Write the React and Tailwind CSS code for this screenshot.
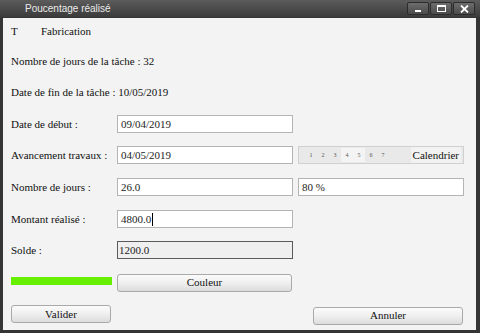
import { useState } from 'react'

// Fenetre "Poucentage réalisé" : barre de titre sombre, formulaire sur fond gris clair.
const JOURS_CALENDRIER = ['1', '2', '3', '4', '5', '6', '7']

function Champ({ valeur, largeur = 'w-[176px]', sombre = false, curseur = false }) {
  return (
    <div
      className={
        sombre
          ? `${largeur} h-[18px] flex items-center border border-[#5a5a5a] bg-[#efefef] pl-[1px] text-[11px] text-[#222]`
          : `${largeur} h-[18px] flex items-center border border-[#b4b4b4] bg-white pl-[3px] text-[11px] text-[#222]`
      }
    >
      <span>{valeur}</span>
      {curseur && <span className="ml-[1px] h-[13px] w-px bg-black" />}
    </div>
  )
}

function Bouton({ texte, largeur }) {
  return (
    <button
      type="button"
      className={`${largeur} h-[18px] rounded-[3px] border border-[#a9a9a9] bg-gradient-to-b from-[#fbfbfb] via-[#efefef] to-[#dcdcdc] font-['Liberation_Serif','DejaVu_Serif',serif] text-[11px] text-[#111] leading-none`}
    >
      {texte}
    </button>
  )
}

function BoutonFenetre({ children }) {
  return (
    <div className="w-[22px] h-[13px] flex items-center justify-center rounded-[2px] border border-[#2c2c2c] bg-gradient-to-b from-[#6e6e6e] to-[#4a4a4a]">
      {children}
    </div>
  )
}

function Ligne({ label, children, haut }) {
  return (
    <div className={`${haut} flex h-[18px] items-center`}>
      <span className="w-[106px] text-[11px] text-[#111]">{label}</span>
      {children}
    </div>
  )
}

export default function App() {
  const [montant] = useState('4800.0')

  return (
    <div className="w-[480px] h-[333px] flex flex-col bg-[#353535] overflow-hidden">
      <div className="h-[17px] flex items-center bg-gradient-to-b from-[#5c5c5c] to-[#3b3b3b]">
        <span className="ml-[25px] font-['Liberation_Sans',Arial,sans-serif] text-[10px] font-medium text-[#ececec]">
          Poucentage réalisé
        </span>
        <div className="ml-auto mr-[5px] flex gap-[1px]">
          <BoutonFenetre>
            <span className="mt-[4px] h-[2px] w-[6px] bg-white" />
          </BoutonFenetre>
          <BoutonFenetre>
            <span className="h-[7px] w-[9px] border border-white border-t-2" />
          </BoutonFenetre>
          <BoutonFenetre>
            <svg width="9" height="8" viewBox="0 0 9 8">
              <path d="M1 0.5 L8 7.5 M8 0.5 L1 7.5" stroke="white" strokeWidth="1.8" />
            </svg>
          </BoutonFenetre>
        </div>
      </div>

      <div className="flex-1 pl-[3px] pr-[4px] pb-[3px] pt-[1px]">
        <div className="h-full flex flex-col bg-[#f3f3f3] pl-[8px] font-['Liberation_Serif','DejaVu_Serif',serif]">
          <div className="mt-[4px] flex h-[18px] items-center text-[11px] text-[#111]">
            <span className="w-[30px]">T</span>
            <span>Fabrication</span>
          </div>

          <div className="mt-[12px] flex h-[18px] items-center text-[11px] text-[#111]">
            Nombre de jours de la tâche : 32
          </div>

          <div className="mt-[13px] flex h-[18px] items-center text-[11px] text-[#111]">
            Date de fin de la tâche : 10/05/2019
          </div>

          <Ligne label="Date de début :" haut="mt-[14px]">
            <Champ valeur="09/04/2019" />
          </Ligne>

          <Ligne label="Avancement travaux :" haut="mt-[13px]">
            <Champ valeur="04/05/2019" />
            <div className="ml-[5px] w-[166px] h-[18px] flex items-center border border-[#d0d0d0] bg-[#e9e9e9]">
              <div className="flex pl-[6px]">
                {JOURS_CALENDRIER.map((jour, i) => (
                  <span
                    key={jour}
                    className={
                      i === 3 || i === 4
                        ? 'w-[12px] h-[14px] flex items-center justify-center bg-[#f4f4f4] text-[6px] text-[#555]'
                        : 'w-[12px] h-[14px] flex items-center justify-center text-[6px] text-[#555]'
                    }
                  >
                    {jour}
                  </span>
                ))}
              </div>
              <span className="ml-auto mr-[2px] h-[16px] px-[2px] flex items-center bg-[#f2f2f2] text-[11px] text-[#111]">
                Calendrier
              </span>
            </div>
          </Ligne>

          <Ligne label="Nombre de jours :" haut="mt-[14px]">
            <Champ valeur="26.0" />
            <div className="ml-[5px]">
              <Champ valeur="80 %" largeur="w-[166px]" />
            </div>
          </Ligne>

          <Ligne label="Montant réalisé :" haut="mt-[14px]">
            <Champ valeur={montant} curseur />
          </Ligne>

          <Ligne label="Solde :" haut="mt-[13px]">
            <Champ valeur="1200.0" sombre />
          </Ligne>

          <div className="mt-[13px] flex h-[18px] items-center">
            <div className="w-[101px] h-[8px] bg-[#66f000]" />
            <div className="ml-[5px]">
              <Bouton texte="Couleur" largeur="w-[175px]" />
            </div>
          </div>

          <div className="mt-[15px] flex h-[18px] items-center">
            <Bouton texte="Valider" largeur="w-[100px]" />
            <div className="ml-auto mr-[13px]">
              <Bouton texte="Annuler" largeur="w-[150px]" />
            </div>
          </div>
        </div>
      </div>
    </div>
  )
}
